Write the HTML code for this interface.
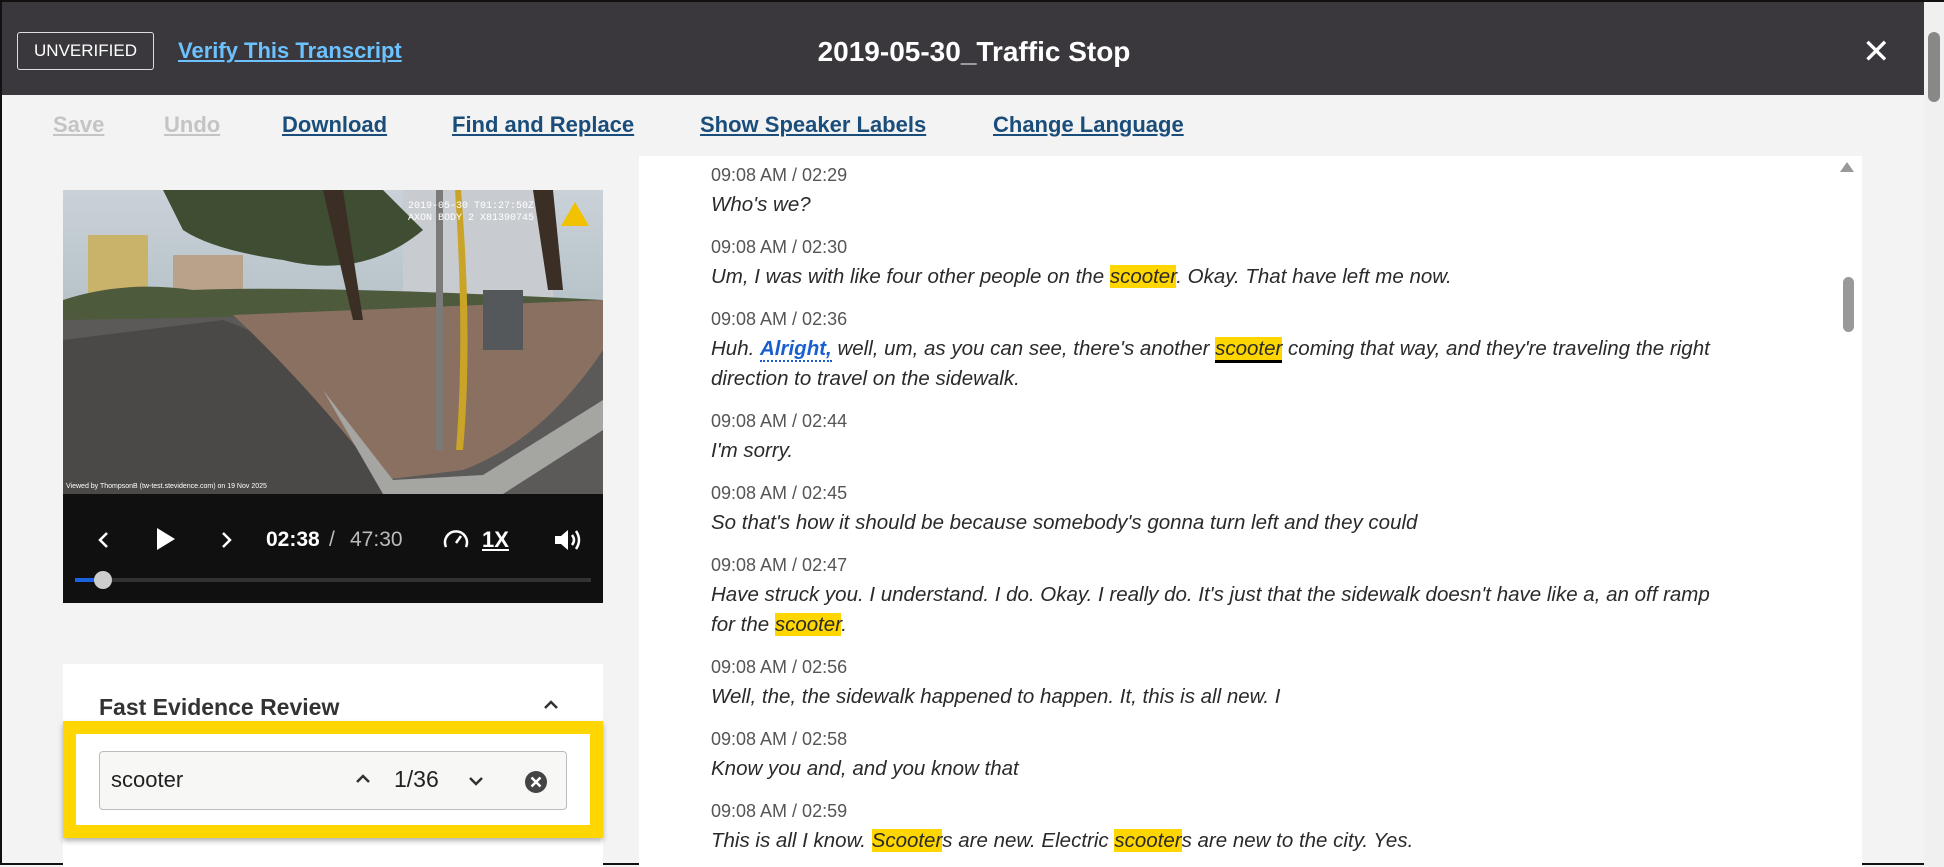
<!DOCTYPE html>
<html><head><meta charset="utf-8"><style>
*{margin:0;padding:0;box-sizing:border-box}
body{width:1944px;height:865px;overflow:hidden;background:#f3f3f3;font-family:"Liberation Sans",sans-serif;position:relative;border:2px solid #111}
.hdr{position:absolute;left:0;top:0;width:1944px;height:93px;background:#3a383d}
.unv{position:absolute;left:15px;top:30px;width:137px;height:38px;border:1.5px solid #ddd;border-radius:3px;color:#fff;font-size:17px;line-height:35px;text-align:center}
.ver{position:absolute;left:176px;top:36px;color:#6cc2ff;font-size:22px;font-weight:bold;text-decoration:underline}
.title{position:absolute;left:0;width:1944px;top:34px;text-align:center;color:#fff;font-size:28px;font-weight:bold}
.x{position:absolute;left:1860px;top:30px;color:#fff;font-size:34px}
.tb a{position:absolute;top:110px;font-size:22px;font-weight:bold;color:#1b4d7a;text-decoration:underline}
.tb a.d{color:#c4c4c4}
.main{position:absolute;left:637px;top:154px;width:1190px;height:711px;background:#fff}
.sb{position:absolute;left:1827px;top:154px;width:33px;height:711px;background:#fff}
.e{position:absolute;left:709px;width:1110px}
.ts{font-size:18px;color:#555;line-height:22px}
.tx{font-size:20.5px;font-style:italic;color:#2a2a2a;line-height:30px;margin-top:4px;letter-spacing:0px}
.h{background:#ffd600}
.vid{position:absolute;left:61px;top:188px;width:540px;height:413px;background:#111;overflow:hidden}
.fer{position:absolute;left:61px;top:662px;width:540px;height:203px;background:#fff}
</style></head><body>
<div class="hdr">
<div class="unv">UNVERIFIED</div>
<div class="ver">Verify This Transcript</div>
<div class="title">2019-05-30_Traffic Stop</div>
<div class="x">✕</div>
</div>
<div style="position:absolute;left:1922px;top:0;width:22px;height:865px;background:#f0f0f0"></div>
<div style="position:absolute;left:1926px;top:30px;width:12px;height:70px;background:#888;border-radius:6px"></div>
<div class="tb">
<a class="d" style="left:51px">Save</a>
<a class="d" style="left:162px">Undo</a>
<a style="left:280px">Download</a>
<a style="left:450px">Find and Replace</a>
<a style="left:698px">Show Speaker Labels</a>
<a style="left:991px">Change Language</a>
</div>
<div class="main"></div>
<div class="sb"><div style="position:absolute;left:11px;top:6px;width:0;height:0;border-left:7px solid transparent;border-right:7px solid transparent;border-bottom:10px solid #999"></div>
<div style="position:absolute;left:14px;top:121px;width:11px;height:55px;background:#999;border-radius:6px"></div></div>

<div class="e" style="top:162px"><div class="ts">09:08 AM / 02:29</div><div class="tx">Who's we?</div></div>
<div class="e" style="top:234px"><div class="ts">09:08 AM / 02:30</div><div class="tx">Um, I was with like four other people on the <span class="h">scooter</span>. Okay. That have left me now.</div></div>
<div class="e" style="top:306px"><div class="ts">09:08 AM / 02:36</div><div class="tx">Huh. <b style="color:#1a5fd0;border-bottom:2px dotted #1a5fd0">Alright,</b> well, um, as you can see, there's another <span class="h" style="border-bottom:3px solid #000">scooter</span> coming that way, and they're traveling the right<br>direction to travel on the sidewalk.</div></div>
<div class="e" style="top:408px"><div class="ts">09:08 AM / 02:44</div><div class="tx">I'm sorry.</div></div>
<div class="e" style="top:480px"><div class="ts">09:08 AM / 02:45</div><div class="tx">So that's how it should be because somebody's gonna turn left and they could</div></div>
<div class="e" style="top:552px"><div class="ts">09:08 AM / 02:47</div><div class="tx">Have struck you. I understand. I do. Okay. I really do. It's just that the sidewalk doesn't have like a, an off ramp<br>for the <span class="h">scooter</span>.</div></div>
<div class="e" style="top:654px"><div class="ts">09:08 AM / 02:56</div><div class="tx">Well, the, the sidewalk happened to happen. It, this is all new. I</div></div>
<div class="e" style="top:726px"><div class="ts">09:08 AM / 02:58</div><div class="tx">Know you and, and you know that</div></div>
<div class="e" style="top:798px"><div class="ts">09:08 AM / 02:59</div><div class="tx">This is all I know. <span class="h">Scooter</span>s are new. Electric <span class="h">scooter</span>s are new to the city. Yes.</div></div>

<div class="vid">
<svg width="540" height="304" viewBox="0 0 540 304" style="position:absolute;left:0;top:0">
<defs><linearGradient id="sk" x1="0" y1="0" x2="0" y2="1"><stop offset="0" stop-color="#c9d2d8"/><stop offset="1" stop-color="#9aa8b0"/></linearGradient></defs>
<rect width="540" height="304" fill="url(#sk)"/>
<rect x="25" y="45" width="60" height="65" fill="#c9b26a"/>
<rect x="110" y="65" width="70" height="50" fill="#b8a38a"/>
<rect x="340" y="0" width="150" height="110" fill="#c8ccd0"/>
<path d="M100 0 Q200 -10 320 0 L360 40 Q300 90 220 70 Q150 60 120 40 Z" fill="#3f4e32"/>
<path d="M0 110 Q60 90 130 100 Q250 95 540 110 L540 140 L0 140Z" fill="#4e5a3c"/>
<path d="M0 130 L540 120 L540 304 L0 304Z" fill="#5b5a58"/>
<path d="M0 150 L160 130 Q220 150 260 200 L320 304 L0 304Z" fill="#4a4948"/>
<path d="M170 125 L540 110 L540 160 Q480 250 400 280 L320 290 Q240 190 170 125Z" fill="#8a7060"/>
<path d="M260 200 L330 290 L420 285 L540 210 L540 240 L440 304 L320 304Z" fill="#a5a5a2"/>
<rect x="373" y="0" width="7" height="260" fill="#7a7a78"/>
<path d="M392 0 L398 0 Q410 150 400 260 L393 260 Q402 150 392 0Z" fill="#c9a426"/>
<rect x="420" y="100" width="40" height="60" fill="#55585a"/>
<path d="M260 0 L280 0 L300 130 L290 130Z" fill="#3a2e25"/>
<path d="M470 0 L490 0 L500 100 L485 100Z" fill="#3a2e25"/>
<path d="M512 12 L498 36 L526 36Z" fill="#f2c200"/>
<text x="345" y="18" fill="#fff" font-size="10" font-family="Liberation Mono">2019-05-30 T01:27:50Z</text>
<text x="345" y="30" fill="#fff" font-size="10" font-family="Liberation Mono">AXON BODY 2 X81390745</text>
<text x="3" y="298" fill="#fff" font-size="7">Viewed by ThompsonB (tw-test.stevidence.com) on 19 Nov 2025</text>
</svg>
<div style="position:absolute;left:0;top:304px;width:540px;height:109px;background:#101010;color:#fff">
<svg style="position:absolute;left:34px;top:36px" width="14" height="20"><path d="M10 3 L3 10 L10 17" stroke="#fff" stroke-width="2.5" fill="none"/></svg>
<svg style="position:absolute;left:92px;top:32px" width="22" height="26"><path d="M2 2 L20 13 L2 24Z" fill="#fff"/></svg>
<svg style="position:absolute;left:156px;top:36px" width="14" height="20"><path d="M4 3 L11 10 L4 17" stroke="#fff" stroke-width="2.5" fill="none"/></svg>
<div style="position:absolute;left:203px;top:34px;font-size:21px;font-weight:bold">02:38</div>
<div style="position:absolute;left:266px;top:34px;font-size:21px;color:#bbb">/</div>
<div style="position:absolute;left:287px;top:34px;font-size:21px;color:#bbb">47:30</div>
<svg style="position:absolute;left:379px;top:33px" width="28" height="24"><path d="M4 20 A11 11 0 1 1 24 20" stroke="#fff" stroke-width="2.5" fill="none"/><path d="M14 16 L19 9" stroke="#fff" stroke-width="2.5"/></svg>
<div style="position:absolute;left:419px;top:33px;font-size:22px;font-weight:bold;text-decoration:underline">1X</div>
<svg style="position:absolute;left:490px;top:33px" width="30" height="26"><path d="M2 9 L8 9 L15 3 L15 23 L8 17 L2 17Z" fill="#fff"/><path d="M19 8 Q23 13 19 18" stroke="#fff" stroke-width="2.5" fill="none"/><path d="M23 4 Q29 13 23 22" stroke="#fff" stroke-width="2.5" fill="none"/></svg>
<div style="position:absolute;left:12px;top:84px;width:516px;height:4px;background:#333"></div>
<div style="position:absolute;left:12px;top:84px;width:28px;height:4px;background:#1a62e0"></div>
<div style="position:absolute;left:31px;top:77px;width:18px;height:18px;background:#ccc;border-radius:50%"></div>
</div>
</div>

<div class="fer">
<div style="position:absolute;left:36px;top:30px;font-size:23px;font-weight:bold;color:#333">Fast Evidence Review</div>
<svg style="position:absolute;left:479px;top:34px" width="18" height="14"><path d="M3 10 L9 4 L15 10" stroke="#333" stroke-width="2.5" fill="none"/></svg>
</div>
<div style="position:absolute;left:61px;top:719px;width:540px;height:117px;border:13px solid #ffd600;background:#fff;box-shadow:0 3px 5px rgba(0,0,0,.3)"></div>
<div style="position:absolute;left:97px;top:749px;width:468px;height:59px;background:#f7f7f6;border:1.5px solid #bbb;border-radius:4px">
<div style="position:absolute;left:11px;top:15px;font-size:22px;color:#222">scooter</div>
<svg style="position:absolute;left:254px;top:20px" width="18" height="14"><path d="M3 10 L9 4 L15 10" stroke="#333" stroke-width="2.5" fill="none"/></svg>
<div style="position:absolute;left:294px;top:14px;font-size:23px;color:#222">1/36</div>
<svg style="position:absolute;left:367px;top:22px" width="18" height="14"><path d="M3 4 L9 10 L15 4" stroke="#333" stroke-width="2.5" fill="none"/></svg>
<svg style="position:absolute;left:424px;top:18px" width="24" height="24"><circle cx="12" cy="12" r="11" fill="#444"/><path d="M7.5 7.5 L16.5 16.5 M16.5 7.5 L7.5 16.5" stroke="#fff" stroke-width="2.5"/></svg>
</div>
</body></html>
